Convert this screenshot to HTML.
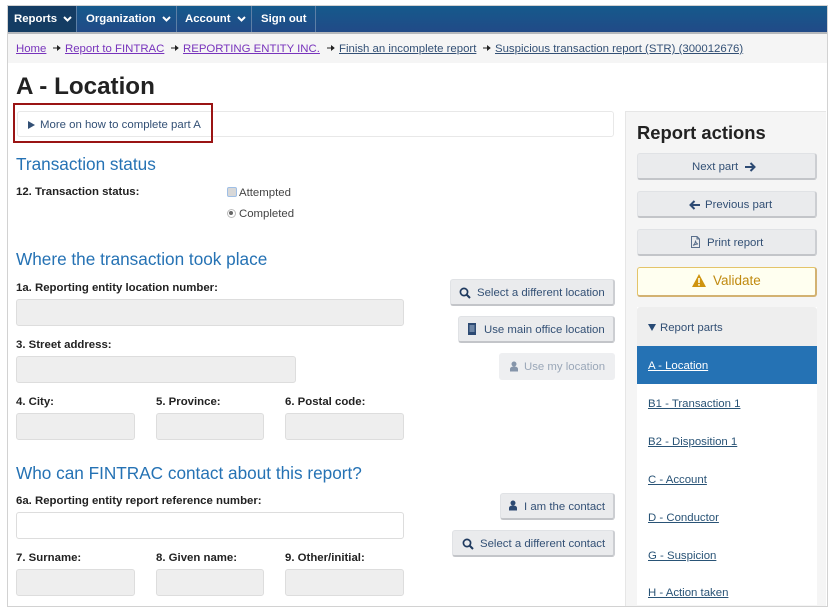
<!DOCTYPE html>
<html><head><meta charset="utf-8"><style>
html,body{margin:0;padding:0;background:#fff}
body{width:832px;height:611px;position:relative;overflow:hidden;font-family:"Liberation Sans",sans-serif;font-size:11.4px;color:#333}
div,a,svg{position:absolute}
.t,.l,h1,h2,.pi{position:absolute;white-space:nowrap;margin:0}
.t,.l,.pi{margin-top:1px}
.l{font-weight:bold;color:#222;line-height:14px}
h2{font-weight:normal;font-size:17.2px;color:#2572b4;line-height:20px}
.in{background:#eee;border:1px solid #ddd;border-radius:3px;box-sizing:border-box;height:27px}
.btn{background:#eaebed;border:1px solid #e0e2e5;border-bottom:2px solid #c3c5c9;border-right:2px solid #ccced2;border-radius:3px;box-sizing:border-box;height:27px;color:#335075}
.btn span{position:absolute;top:6px;white-space:nowrap;line-height:14px}
.nav{color:#fff;font-weight:bold;line-height:14px;top:12px;white-space:nowrap}
.sep{top:6px;width:1px;height:26px;background:#5d7fa6}
.bc{top:42px;line-height:14px;white-space:nowrap;text-decoration:underline;color:#335075}
.v{color:#7834bc}
.ar{top:44px}
.pi{left:648px;line-height:14px;color:#295376;text-decoration:underline}
</style></head><body>
<div style="left:7px;top:5px;width:819px;height:600px;border:1px solid #d2d2d2"></div>
<div style="left:8px;top:6px;width:819px;height:26px;background:linear-gradient(#155a8c,#214a87)"></div>
<div style="left:8px;top:32px;width:819px;height:2px;background:#b5b8bc"></div>
<div style="left:8px;top:6px;width:68px;height:26px;background:#143c63"></div>
<div class="sep" style="left:76px"></div><div class="sep" style="left:176px"></div><div class="sep" style="left:251px"></div><div class="sep" style="left:315px"></div>
<a class="nav" style="left:14px">Reports</a><a class="nav" style="left:86px">Organization</a><a class="nav" style="left:185px">Account</a><a class="nav" style="left:261px">Sign out</a>
<svg style="left:63px;top:16px" width="9" height="6" viewBox="0 0 9 6"><path d="M1 1l3.500 3.500L8 1" fill="none" stroke="#fff" stroke-width="2"/></svg>
<svg style="left:162px;top:16px" width="9" height="6" viewBox="0 0 9 6"><path d="M1 1l3.500 3.500L8 1" fill="none" stroke="#fff" stroke-width="2"/></svg>
<svg style="left:237px;top:16px" width="9" height="6" viewBox="0 0 9 6"><path d="M1 1l3.500 3.500L8 1" fill="none" stroke="#fff" stroke-width="2"/></svg>

<div style="left:8px;top:34px;width:819px;height:29px;background:#f5f5f5"></div>
<a class="bc v" style="left:16px">Home</a>
<a class="bc v" style="left:65px">Report to FINTRAC</a>
<a class="bc v" style="left:183px">REPORTING ENTITY INC.</a>
<a class="bc" style="left:339px">Finish an incomplete report</a>
<a class="bc" style="left:495px">Suspicious transaction report (STR) (300012676)</a>
<svg class="ar" style="left:53px" width="8" height="8" viewBox="0 0 8 8"><path d="M0 4h4M4.500 2L7 4 4.500 6z" stroke="#222" stroke-width="1" fill="#222"/></svg>
<svg class="ar" style="left:171px" width="8" height="8" viewBox="0 0 8 8"><path d="M0 4h4M4.500 2L7 4 4.500 6z" stroke="#222" stroke-width="1" fill="#222"/></svg>
<svg class="ar" style="left:327px" width="8" height="8" viewBox="0 0 8 8"><path d="M0 4h4M4.500 2L7 4 4.500 6z" stroke="#222" stroke-width="1" fill="#222"/></svg>
<svg class="ar" style="left:483px" width="8" height="8" viewBox="0 0 8 8"><path d="M0 4h4M4.500 2L7 4 4.500 6z" stroke="#222" stroke-width="1" fill="#222"/></svg>

<h1 style="left:16px;top:73px;font-size:24.2px;line-height:28px;color:#222">A - Location</h1>

<div style="left:17px;top:111px;width:595px;height:24px;border:1px solid #e8e8e8;border-radius:3px"></div>
<div style="left:13px;top:103px;width:200px;height:40px;box-sizing:border-box;border:2px solid #9a1414"></div>
<svg style="left:28px;top:121px" width="7" height="8" viewBox="0 0 7 8"><path d="M0 0l7 4-7 4z" fill="#335075"/></svg>
<span class="t" style="left:40px;top:117px;line-height:14px;color:#335075">More on how to complete part A</span>

<h2 style="left:16px;top:154px">Transaction status</h2>
<span class="l" style="left:16px;top:184px">12. Transaction status:</span>
<div style="left:227px;top:187px;width:8px;height:8px;background:#d8d8d8;border:1px solid #9fbfe6;border-radius:2px"></div>
<span class="t" style="left:239px;top:185px;line-height:14px;color:#444">Attempted</span>
<div style="left:227px;top:209px;width:7px;height:7px;background:#fff;border:1px solid #bbb;border-radius:50%"></div>
<div style="left:229px;top:211px;width:4px;height:4px;background:#666;border-radius:50%"></div>
<span class="t" style="left:239px;top:206px;line-height:14px;color:#444">Completed</span>

<h2 style="left:16px;top:249px">Where the transaction took place</h2>
<span class="l" style="left:16px;top:280px">1a. Reporting entity location number:</span>
<div class="in" style="left:16px;top:299px;width:388px"></div>
<span class="l" style="left:16px;top:337px">3. Street address:</span>
<div class="in" style="left:16px;top:356px;width:280px"></div>
<span class="l" style="left:16px;top:394px">4. City:</span>
<span class="l" style="left:156px;top:394px">5. Province:</span>
<span class="l" style="left:285px;top:394px">6. Postal code:</span>
<div class="in" style="left:16px;top:413px;width:119px"></div>
<div class="in" style="left:156px;top:413px;width:108px"></div>
<div class="in" style="left:285px;top:413px;width:119px"></div>

<h2 style="left:16px;top:463px">Who can FINTRAC contact about this report?</h2>
<span class="l" style="left:16px;top:493px">6a. Reporting entity report reference number:</span>
<div class="in" style="left:16px;top:512px;width:388px;background:#fff"></div>
<span class="l" style="left:16px;top:550px">7. Surname:</span>
<span class="l" style="left:156px;top:550px">8. Given name:</span>
<span class="l" style="left:285px;top:550px">9. Other/initial:</span>
<div class="in" style="left:16px;top:569px;width:119px"></div>
<div class="in" style="left:156px;top:569px;width:108px"></div>
<div class="in" style="left:285px;top:569px;width:119px"></div>

<div class="btn" style="left:450px;top:279px;width:165px"><span style="left:26px">Select a different location</span></div>
<svg style="left:459px;top:287px" width="12" height="12" viewBox="0 0 12 12"><circle cx="5" cy="5" r="3.600" fill="none" stroke="#1f3a5f" stroke-width="1.700"/><path d="M7.500 7.500L11 11" stroke="#1f3a5f" stroke-width="2"/></svg>
<div class="btn" style="left:458px;top:316px;width:157px"><span style="left:25px">Use main office location</span></div>
<svg style="left:467px;top:323px" width="10" height="12" viewBox="0 0 10 12"><path d="M1 0h8v12H1z" fill="#2d4a73"/><path d="M2.500 2h5v7h-5z" fill="#6d85a5"/></svg>
<div class="btn" style="left:499px;top:353px;width:116px;border:0;background:#eeeff1"><span style="left:25px;top:7px;color:#9aa7b8">Use my location</span></div>
<svg style="left:509px;top:361px" width="10" height="11" viewBox="0 0 10 11"><circle cx="5" cy="3" r="2.500" fill="#8595aa"/><path d="M1 10.500V8c0-1.500 1.500-2.500 4-2.500S9 6.500 9 8v2.500z" fill="#8595aa"/></svg>

<div class="btn" style="left:500px;top:493px;width:115px"><span style="left:23px">I am the contact</span></div>
<svg style="left:508px;top:500px" width="10" height="11" viewBox="0 0 10 11"><circle cx="5" cy="3" r="2.500" fill="#2d4a73"/><path d="M1 10.500V8c0-1.500 1.500-2.500 4-2.500S9 6.500 9 8v2.500z" fill="#2d4a73"/></svg>
<div class="btn" style="left:452px;top:530px;width:163px"><span style="left:27px">Select a different contact</span></div>
<svg style="left:462px;top:538px" width="12" height="12" viewBox="0 0 12 12"><circle cx="5" cy="5" r="3.600" fill="none" stroke="#1f3a5f" stroke-width="1.700"/><path d="M7.500 7.500L11 11" stroke="#1f3a5f" stroke-width="2"/></svg>

<div style="left:625px;top:111px;width:201px;height:495px;box-sizing:border-box;background:#f5f5f5;border:1px solid #e6e6e6;border-bottom:0;border-right:0"></div>
<h1 style="left:637px;top:122px;font-size:18.4px;line-height:22px;color:#222">Report actions</h1>
<div class="btn" style="left:637px;top:153px;width:180px"><span style="left:54px">Next part</span></div>
<svg style="left:745px;top:162px" width="11" height="10" viewBox="0 0 11 10"><path d="M0 5h8M5.500 1l4 4-4 4" fill="none" stroke="#2d4a73" stroke-width="2"/></svg>
<div class="btn" style="left:637px;top:191px;width:180px"><span style="left:67px">Previous part</span></div>
<svg style="left:689px;top:200px" width="11" height="10" viewBox="0 0 11 10"><path d="M11 5H3M5.500 1l-4 4 4 4" fill="none" stroke="#2d4a73" stroke-width="2"/></svg>
<div class="btn" style="left:637px;top:229px;width:180px"><span style="left:69px">Print report</span></div>
<svg style="left:690px;top:236px" width="11" height="12" viewBox="0 0 11 12"><path d="M1.500.5h5.500l2.500 2.500v8.500h-8zM7 .5V3h2.500M3 9.500c1.500-1 2.500-3 2.500-5 0 2 1 3 2.500 3.500-2 0-3.500.5-5 1.500z" fill="none" stroke="#5a6f8c" stroke-width="1"/></svg>
<div style="left:637px;top:267px;width:180px;height:30px;box-sizing:border-box;background:#fffff0;border:1px solid #e4c469;border-bottom:2px solid #d3b272;border-right:2px solid #d3b272;border-radius:3px"></div>
<span class="t" style="left:713px;top:272px;font-size:13.500px;line-height:16px;color:#c08a10">Validate</span>
<svg style="left:692px;top:274px" width="14" height="13" viewBox="0 0 14 13"><path d="M7 0l7 13H0z" fill="#cf9410"/><path d="M6.200 4h1.600v5H6.200zM6.200 10h1.600v1.600H6.200z" fill="#fffff0"/></svg>

<div style="left:637px;top:307px;width:180px;height:298px;background:#fff"></div>
<div style="left:637px;top:307px;width:180px;height:39px;background:#eee;border-radius:3px 3px 0 0"></div>
<svg style="left:648px;top:324px" width="8" height="7" viewBox="0 0 8 7"><path d="M0 0h8L4 7z" fill="#284a75"/></svg>
<span class="t" style="left:660px;top:320px;line-height:14px;color:#335075">Report parts</span>
<div style="left:637px;top:346px;width:180px;height:38px;background:#2572b4"></div>
<span class="pi" style="top:358px;color:#fff">A - Location</span>
<span class="pi" style="top:396px">B1 - Transaction 1</span>
<span class="pi" style="top:434px">B2 - Disposition 1</span>
<span class="pi" style="top:472px">C - Account</span>
<span class="pi" style="top:510px">D - Conductor</span>
<span class="pi" style="top:548px">G - Suspicion</span>
<span class="pi" style="top:585px">H - Action taken</span>
</body></html>
